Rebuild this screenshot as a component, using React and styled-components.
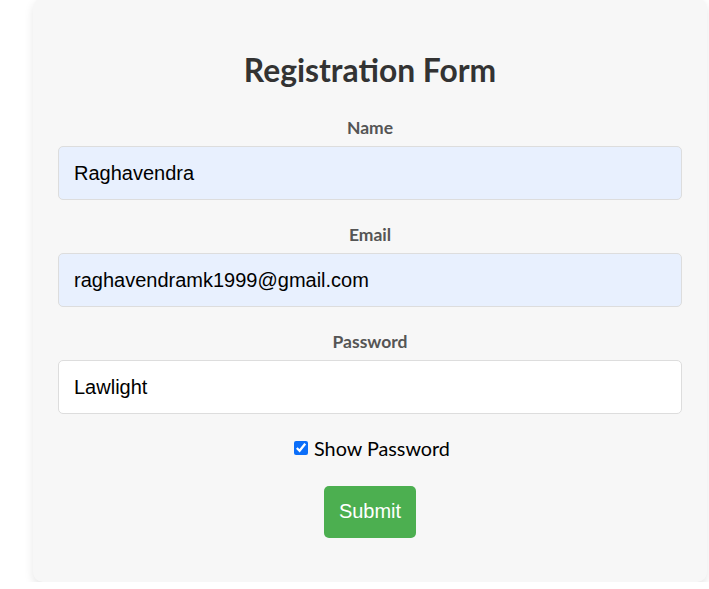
import React, { useState } from "react";
import styled, { createGlobalStyle } from "styled-components";

const GlobalStyle = createGlobalStyle`
  body {
    margin: 0;
    background: #ffffff;
    font-family: "Lato", "Liberation Sans", sans-serif;
  }
`;

const Page = styled.div`
  display: flex;
  padding-left: 33px;
`;

const Card = styled.form`
  width: 674px;
  box-sizing: border-box;
  margin-top: -2px;
  padding: 25px 25px 44px;
  background: #f7f7f7;
  border-radius: 10px;
  box-shadow: 0 4px 10px rgba(0, 0, 0, 0.1);
  display: flex;
  flex-direction: column;
  align-items: center;
`;

const Title = styled.h2`
  margin: 28px 0 28px;
  font-size: 31.8px;
  line-height: 38px;
  font-weight: 700;
  color: #333;
`;

const Field = styled.div`
  width: 100%;
  display: flex;
  flex-direction: column;
  align-items: center;
  margin-bottom: 24.5px;
`;

const Label = styled.label`
  font-size: 17.5px;
  line-height: 21px;
  font-weight: 700;
  color: #555;
  margin-bottom: 7.5px;
`;

const Input = styled.input`
  width: 100%;
  box-sizing: border-box;
  height: 54px;
  padding: 2px 15px 0;
  font-family: "Liberation Sans", Arial, sans-serif;
  font-size: 20px;
  color: #000;
  border: 1px solid #ddd;
  border-radius: 5px;
  background: ${(p) => (p.$filled ? "#e8f0fe" : "#ffffff")};
  outline: none;
`;

const CheckRow = styled.label`
  display: flex;
  align-items: center;
  gap: 6px;
  margin-top: -2.5px;
  margin-left: 4px;
  font-size: 19.8px;
  line-height: 24px;
  color: #000;

  input {
    width: 14px;
    height: 14px;
    margin: 0;
    accent-color: #0b6ef9;
  }
`;

const Submit = styled.button`
  margin-top: 26px;
  padding: 0 15px;
  height: 52px;
  border: none;
  border-radius: 5px;
  background: #4caf50;
  color: #fff;
  font-family: "Liberation Sans", Arial, sans-serif;
  font-size: 20px;
  cursor: pointer;
`;

const App = () => {
  const [show, setShow] = useState(true);
  return (
    <>
      <GlobalStyle />
      <Page>
        <Card onSubmit={(e) => e.preventDefault()}>
          <Title>Registration Form</Title>
          <Field>
            <Label>Name</Label>
            <Input $filled defaultValue="Raghavendra" />
          </Field>
          <Field>
            <Label>Email</Label>
            <Input $filled defaultValue="raghavendramk1999@gmail.com" />
          </Field>
          <Field>
            <Label>Password</Label>
            <Input type={show ? "text" : "password"} defaultValue="Lawlight" />
          </Field>
          <CheckRow>
            <input
              type="checkbox"
              checked={show}
              onChange={() => setShow(!show)}
            />
            Show Password
          </CheckRow>
          <Submit type="submit">Submit</Submit>
        </Card>
      </Page>
    </>
  );
};

export default App;
